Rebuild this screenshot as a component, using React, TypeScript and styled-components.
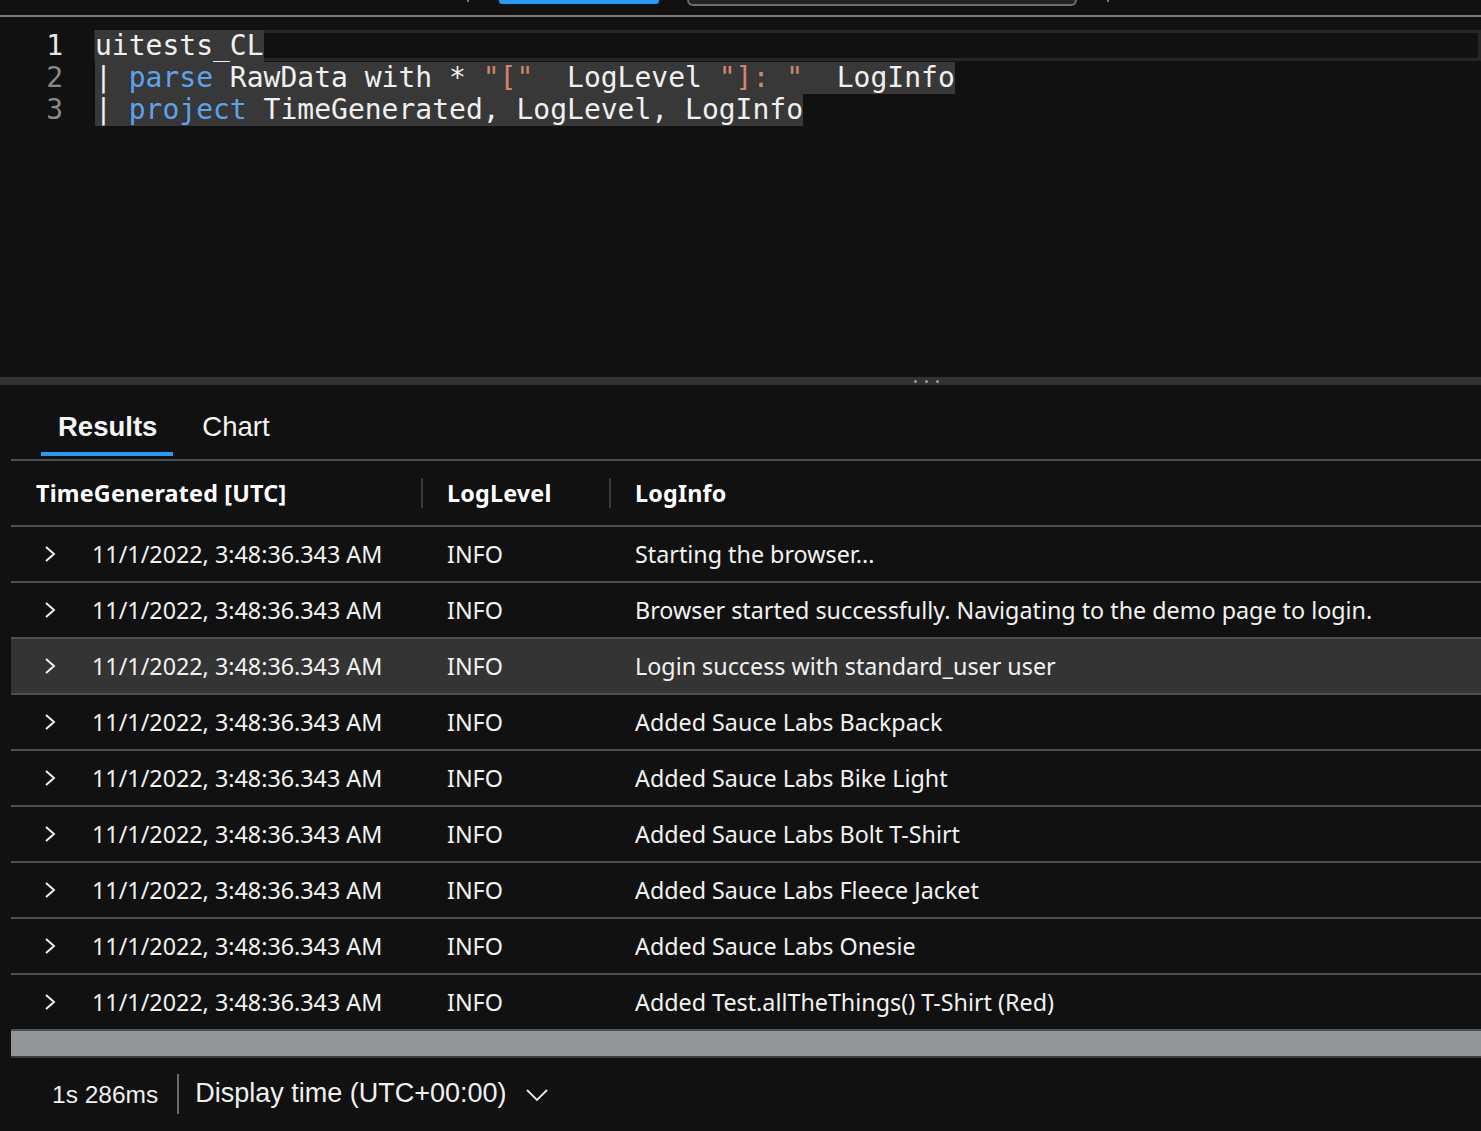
import styled, { createGlobalStyle } from "styled-components";

const rows = [
  { info: "Starting the browser..." },
  { info: "Browser started successfully. Navigating to the demo page to login." },
  { info: "Login success with standard_user user", active: true },
  { info: "Added Sauce Labs Backpack" },
  { info: "Added Sauce Labs Bike Light" },
  { info: "Added Sauce Labs Bolt T-Shirt" },
  { info: "Added Sauce Labs Fleece Jacket" },
  { info: "Added Sauce Labs Onesie" },
  { info: "Added Test.allTheThings() T-Shirt (Red)" },
];

const App = () => {
  return (
    <Page>
      <GlobalStyle />
      <TopStrip>
        <Tick />
        <BlueBar />
        <SearchEdge />
        <Tick />
      </TopStrip>

      <Editor>
        <CodeLine>
          <LineNo $current>1</LineNo>
          <CodeText $current>
            <Sel>uitests_CL</Sel>
          </CodeText>
        </CodeLine>
        <CodeLine>
          <LineNo>2</LineNo>
          <CodeText>
            <Sel>
              | <Kw>parse</Kw> RawData with * <Str>"["</Str>  LogLevel <Str>"]: "</Str>  LogInfo
            </Sel>
          </CodeText>
        </CodeLine>
        <CodeLine>
          <LineNo>3</LineNo>
          <CodeText>
            <Sel>
              | <Kw>project</Kw> TimeGenerated, LogLevel, LogInfo
            </Sel>
          </CodeText>
        </CodeLine>
      </Editor>

      <Splitter>
        <Dot />
        <Dot />
        <Dot />
      </Splitter>

      <TabBar>
        <Tab $active>Results</Tab>
        <Tab>Chart</Tab>
      </TabBar>

      <Table>
        <HeaderRow>
          <HeadCell $first>TimeGenerated [UTC]</HeadCell>
          <HeadCell>LogLevel</HeadCell>
          <HeadCell>LogInfo</HeadCell>
        </HeaderRow>
        {rows.map((r, i) => (
          <Row key={i} $active={r.active}>
            <TimeCell>
              <Chevron width="14" height="20" viewBox="0 0 14 20">
                <polyline points="3,3 11,10 3,17" />
              </Chevron>
              11/1/2022, 3:48:36.343 AM
            </TimeCell>
            <Cell>INFO</Cell>
            <Cell>{r.info}</Cell>
          </Row>
        ))}
      </Table>
      <ScrollBar />

      <Footer>
        <Duration>1s 286ms</Duration>
        <FooterDivider />
        <DisplayTime>Display time (UTC+00:00)</DisplayTime>
        <DownChevron width="24" height="14" viewBox="0 0 24 14">
          <polyline points="2,2 12,12 22,2" />
        </DownChevron>
      </Footer>
    </Page>
  );
};

export default App;

const GlobalStyle = createGlobalStyle`
  html, body {
    margin: 0;
    padding: 0;
    background: #111111;
  }
  * {
    box-sizing: border-box;
  }
`;

const Page = styled.div`
  width: 1481px;
  height: 1131px;
  background: #111111;
  color: #f2f2f2;
  overflow: hidden;
  display: flex;
  flex-direction: column;
`;

const TopStrip = styled.div`
  height: 17px;
  border-bottom: 2px solid #7a7a7a;
  display: flex;
  align-items: flex-start;
  padding-left: 467px;
`;

const Tick = styled.div`
  width: 2px;
  height: 2px;
  background: #777;
  margin-right: 30px;
`;

const BlueBar = styled.div`
  width: 160px;
  height: 4px;
  background: #2899f5;
  border-radius: 0 0 3px 3px;
`;

const SearchEdge = styled.div`
  width: 390px;
  height: 6px;
  margin-left: 28px;
  margin-right: 30px;
  background: #242424;
  border: 2px solid #6e6e6e;
  border-top: none;
  border-radius: 0 0 14px 14px;
`;

const Editor = styled.div`
  height: 360px;
  padding-top: 12px;
  font-family: "DejaVu Sans Mono", monospace;
  font-size: 28px;
`;

const CodeLine = styled.div`
  display: flex;
  height: 32px;
  line-height: 32px;
  padding-top: 1px;
`;

const LineNo = styled.div<{ $current?: boolean }>`
  width: 63px;
  text-align: right;
  color: ${(p) => (p.$current ? "#e8e8e8" : "#8a8a8a")};
`;

const CodeText = styled.div<{ $current?: boolean }>`
  flex: 1;
  margin-left: 31px;
  padding-left: 1px;
  white-space: pre;
  color: #f0f0f0;
  box-shadow: ${(p) => (p.$current ? "inset 0 0 0 3px #262626" : "none")};
`;

const Sel = styled.span`
  background: #383838;
  display: inline-block;
  height: 32px;
`;

const Kw = styled.span`
  color: #5ea2ec;
`;

const Str = styled.span`
  color: #d0866a;
`;

const Splitter = styled.div`
  height: 8px;
  background: #333333;
  display: flex;
  align-items: center;
  padding-left: 914px;
  gap: 8px;
`;

const Dot = styled.div`
  width: 3px;
  height: 3px;
  border-radius: 50%;
  background: #9a9a9a;
`;

const TabBar = styled.div`
  height: 76px;
  margin-left: 11px;
  padding-left: 30px;
  display: flex;
  align-items: flex-end;
  gap: 12px;
  border-bottom: 2px solid #4b4e54;
`;

const Tab = styled.div<{ $active?: boolean }>`
  height: 68px;
  padding: 14px 16px 0 17px;
  display: flex;
  align-items: center;
  font-family: "Liberation Sans", Arial, sans-serif;
  font-size: 27.5px;
  font-weight: ${(p) => (p.$active ? 700 : 400)};
  color: #f5f5f5;
  border-bottom: 4px solid ${(p) => (p.$active ? "#2899f5" : "transparent")};
  margin-bottom: 3px;
`;

const Table = styled.div`
  margin-left: 11px;
  font-family: "Noto Sans", "Open Sans", sans-serif;
  font-size: 23.3px;
`;

const gridCols = "410px 188px 1fr";

const HeaderRow = styled.div`
  display: grid;
  grid-template-columns: ${gridCols};
  height: 66px;
  align-items: center;
  border-bottom: 2px solid #4b4e54;
`;

const HeadCell = styled.div<{ $first?: boolean }>`
  font-weight: 700;
  color: #ffffff;
  padding-left: ${(p) => (p.$first ? "25px" : "24px")};
  border-left: ${(p) => (p.$first ? "none" : "2px solid #3a3a3a")};
  line-height: 30px;
  letter-spacing: 0.2px;
`;

const Row = styled.div<{ $active?: boolean }>`
  display: grid;
  grid-template-columns: ${gridCols};
  height: 56px;
  align-items: center;
  background: ${(p) => (p.$active ? "#343434" : "transparent")};
  border-bottom: 2px solid #4f4f4f;
  white-space: nowrap;
`;

const TimeCell = styled.div`
  display: flex;
  align-items: center;
  padding-left: 32px;
`;

const Chevron = styled.svg`
  fill: none;
  stroke: #f2f2f2;
  stroke-width: 2;
  margin-right: 35px;
`;

const Cell = styled.div`
  padding-left: 26px;
`;

const ScrollBar = styled.div`
  margin-left: 11px;
  height: 27px;
  background: #939699;
  border-bottom: 2px solid #3a3a3a;
`;

const Footer = styled.div`
  flex: 1;
  display: flex;
  align-items: center;
  padding-left: 52px;
  padding-bottom: 2px;
  font-family: "Liberation Sans", Arial, sans-serif;
  color: #f0f0f0;
`;

const Duration = styled.div`
  font-size: 24.5px;
  margin-top: 3px;
`;

const FooterDivider = styled.div`
  width: 2px;
  height: 40px;
  background: #6a6a6a;
  margin: 0 16px 0 19px;
`;

const DisplayTime = styled.div`
  font-size: 27px;
`;

const DownChevron = styled.svg`
  fill: none;
  stroke: #e8e8e8;
  stroke-width: 1.8;
  margin-left: 18px;
  margin-top: 2px;
`;
